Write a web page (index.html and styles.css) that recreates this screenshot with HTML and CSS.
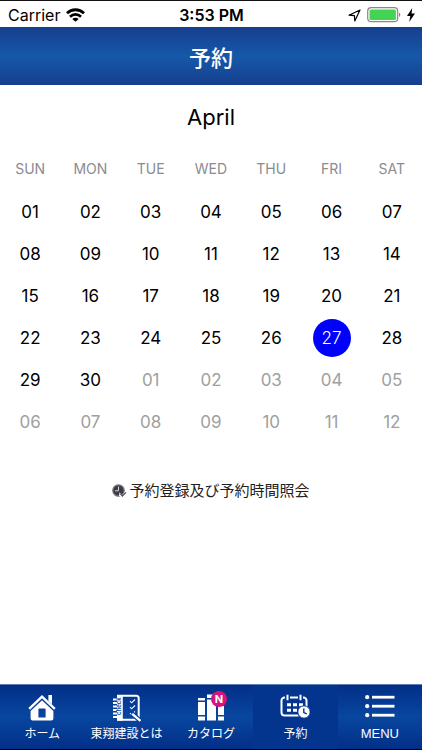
FILE: index.html
```html
<!DOCTYPE html>
<html lang="ja">
<head>
    <meta charset="UTF-8">
    <meta name="viewport" content="width=device-width, initial-scale=1.0">
    <title>予約</title>
    <link rel="stylesheet" href="styles.css">
</head>
<body>
    <!-- Status bar -->
    <div class="status-bar">
        <div class="status-left">
            <span>Carrier</span>
            <svg width="19" height="14" viewBox="0 0 19 14" fill="none" stroke="#000" stroke-width="2.8">
                <path d="M1 5.2C5.8.6 13.2.6 18 5.2"/>
                <path d="M4 8.7c3.2-3 7.8-3 11 0"/>
                <path d="M9.5 13.8L6.3 10.9c1.8-1.7 4.6-1.7 6.4 0z" fill="#000" stroke="none"/>
            </svg>
        </div>
        <div class="status-time">3:53 PM</div>
        <div class="status-right">
            <svg width="13" height="13" viewBox="0 0 13 13" fill="none" stroke="#000" stroke-width="1.2" stroke-linejoin="round">
                <path d="M12 1L1 6.2l5.4.5.4 5.3z"/>
            </svg>
            <svg width="34" height="16" viewBox="0 0 34 16">
                <rect x=".7" y=".7" width="30" height="14" rx="3.5" fill="#fff" stroke="#888" stroke-width="1.2"/>
                <rect x="2.5" y="2.5" width="26.4" height="10.4" rx="1.5" fill="#43d551"/>
                <path d="M32 5.5c1.8.8 1.8 3.6 0 4.4z" fill="#888"/>
            </svg>
            <svg width="8" height="14" viewBox="0 0 8 14"><path d="M5.2 0L0 8h3.3L2.2 14 8 5.6H4.6z"/></svg>
        </div>
    </div>

    <header class="header">
        <h1>予約</h1>
    </header>

    <main class="content">
        <!-- Calendar -->
        <table class="calendar">
            <caption>April</caption>
            <thead>
                <tr><th>SUN</th><th>MON</th><th>TUE</th><th>WED</th><th>THU</th><th>FRI</th><th>SAT</th></tr>
            </thead>
            <tbody id="days"></tbody>
        </table>

        <a href="#" class="reserve-link">
            <svg width="15" height="14" viewBox="0 0 15 14">
                <circle cx="6.5" cy="6.5" r="5.7" fill="#3c3c46" stroke="#777780" stroke-width="1.2"/>
                <path d="M6.5 2.5v4.3H3" fill="none" stroke="#d5d5dc" stroke-width="1"/>
                <path d="M7.5 8.3l2.6 3 4.2-4.6v5L11 14 7 12z" fill="#fff"/>
                <path d="M8.4 9.8l2 2.2L14 8.4" fill="none" stroke="#555560" stroke-width="1.3"/>
            </svg>
            <span>予約登録及び予約時間照会</span>
        </a>
    </main>

    <!-- Bottom navigation -->
    <nav class="tab-bar">
        <a href="#" class="tab">
            <svg class="tab-icon" width="30" height="28" viewBox="0 0 30 28">
                <path d="M2.2 14.8L15 2.6l12.8 12.2" fill="none" stroke="#fff" stroke-width="2.4"/>
                <path d="M21.4 1H25v9.3l-3.6-3.4z" fill="#fff"/>
                <path fill-rule="evenodd" d="M15 6.3l11.4 10.6v7.6a2 2 0 0 1-2 2H5.6a2 2 0 0 1-2-2v-7.6zM12.4 14.6a1 1 0 0 0-1 1v7.8h7.2v-7.8a1 1 0 0 0-1-1z" fill="#fff"/>
            </svg>
            <span>ホーム</span>
        </a>
        <a href="#" class="tab">
            <svg class="tab-icon" width="30" height="28" viewBox="0 0 30 28" fill="none" stroke="#fff">
                <path d="M6 1.8h18.5a2.2 2.2 0 0 1 2.2 2.2v19.5a2.2 2.2 0 0 1-2.2 2.2H6z" stroke-width="2"/>
                <path d="M5 1h5.8v25.6H5z" fill="#fff" stroke="none"/>
                <path d="M1 5.5h5M1 9h5M1 12.5h5M1 16h5M1 19.5h5M1 23h5" stroke-width="2"/>
                <text x="-21" y="9.4" transform="rotate(-90)" class="note-text">check</text>
                <path d="M18 7l1.6 1.8L23 5.5M18 13l1.6 1.8 3.4-3.3M18 19l1.6 1.8 3.4-3.3" stroke-width="1.1"/>
                <path d="M20 19.5l9 8" stroke="#073d98" stroke-width="4.6"/>
                <path d="M20.2 19.8l8.3 7" stroke-width="2.4"/>
            </svg>
            <span>東翔建設とは</span>
        </a>
        <a href="#" class="tab">
            <span class="icon-box">
                <svg class="tab-icon" width="30" height="28" viewBox="0 0 30 28" fill="#fff">
                    <path d="M2 4h7v2.5H2zM2 8h7v13H2zM2 22.5h7v4H2z"/>
                    <path d="M11 .5h9V4h-9zM11 5.5h9v21h-9z"/>
                    <path d="M22 12h6v9h-6zM22 22.5h6v4h-6z"/>
                </svg>
                <span class="badge">N</span>
            </span>
            <span>カタログ</span>
        </a>
        <a href="#" class="tab active">
            <svg class="tab-icon" width="30" height="28" viewBox="0 0 30 28" fill="none" stroke="#fff" stroke-width="2">
                <path d="M18.5 21.5h-14a3 3 0 0 1-3-3V6.5a3 3 0 0 1 3-3h19a3 3 0 0 1 3 3V13"/>
                <path d="M7.5 1v5.5M20.5 1v5.5" stroke="#03358f" stroke-width="5"/>
                <path d="M7.5 .8v5.4M20.5 .8v5.4"/>
                <path d="M7 10.8h4M13 10.8h4M19 10.8h4M7 16.3h4M13 16.3h4" stroke-width="3"/>
                <circle cx="24" cy="18" r="6.2" fill="#fff" stroke="#03358f" stroke-width="1"/>
                <path d="M23.8 14.4v4.2l3 1.3" stroke="#03358f" stroke-width="1.4"/>
            </svg>
            <span>予約</span>
        </a>
        <a href="#" class="tab">
            <svg class="tab-icon" width="30" height="28" viewBox="0 0 30 28" fill="#fff">
                <circle cx="2.2" cy="3.2" r="2.1"/><path d="M7 1.8h22.5v2.8H7z"/>
                <circle cx="2.2" cy="12.2" r="2.1"/><path d="M7 10.8h22.5v2.8H7z"/>
                <circle cx="2.2" cy="21.2" r="2.1"/><path d="M7 19.8h22.5v2.8H7z"/>
            </svg>
            <span class="tab-menu">MENU</span>
        </a>
    </nav>

    <script>
        // April starts on Sunday, the last cells belong to May
        const body = document.getElementById('days');
        const daysInMonth = 30;
        const selected = 27;

        for (let week = 0; week < 6; week++) {
            const row = body.insertRow();
            for (let d = 1; d <= 7; d++) {
                const n = week * 7 + d;
                const day = n > daysInMonth ? n - daysInMonth : n;
                const button = document.createElement('button');
                button.type = 'button';
                button.className = 'day';
                if (n > daysInMonth) button.classList.add('other-month');
                if (n === selected) button.classList.add('selected');
                button.textContent = String(day).padStart(2, '0');
                row.insertCell().appendChild(button);
            }
        }
    </script>
</body>
</html>
```
FILE: styles.css
```css
* {
    box-sizing: border-box;
}
body {
    margin: 0;
    min-height: 100vh;
    display: flex;
    flex-direction: column;
    background: #fff;
    color: #000;
    font-family: Inter, "Noto Sans CJK JP", sans-serif;
}

/* Status bar */
.status-bar {
    display: grid;
    grid-template-columns: 1fr auto 1fr;
    align-items: center;
    height: 27px;
    padding: 2px 7px 0 8px;
    border-top: 1px solid #111;
    font-size: 16px;
}
.status-left,
.status-right {
    display: flex;
    align-items: center;
    gap: 6px;
}
.status-right {
    justify-content: flex-end;
    gap: 6px;
}
.status-time {
    font-weight: 600;
}

/* Header */
.header {
    display: flex;
    align-items: center;
    justify-content: center;
    height: 58px;
    background: linear-gradient(#163f8f, #1658a9 50%, #163f8f);
    color: #fff;
}
.header h1 {
    margin: 0;
    font-size: 22px;
    font-weight: 500;
}

.content {
    flex: 1;
}

/* Calendar */
.calendar {
    width: 100%;
    table-layout: fixed;
    border-collapse: collapse;
}
.calendar caption {
    padding-top: 16px;
    font-size: 22px;
    line-height: 32px;
}
.calendar th {
    height: 58px;
    padding: 12px 0 0;
    color: #8b8b90;
    font-size: 14px;
    font-weight: 400;
}
.calendar td {
    height: 42px;
    padding: 0;
    text-align: center;
}
.day {
    width: 38px;
    height: 38px;
    padding: 0;
    border: 0;
    border-radius: 50%;
    background: none;
    color: #000;
    font-family: inherit;
    font-size: 17px;
    vertical-align: middle;
    cursor: pointer;
}
.day.other-month {
    color: #a0a0a0;
}
.day.selected {
    background: #00f;
    color: #fff;
    font-weight: 300;
}

/* Link below the calendar */
.reserve-link {
    display: flex;
    align-items: center;
    justify-content: center;
    gap: 2px;
    margin-top: 36px;
    color: #222;
    font-size: 15px;
    line-height: 24px;
    text-decoration: none;
}

/* Bottom navigation */
.tab-bar {
    display: grid;
    grid-template-columns: repeat(5, 1fr);
    height: 66px;
    border-top: 1px solid #5f7db5;
    border-bottom: 1px solid #000;
    background: linear-gradient(#022f87, #0846a0 50%, #022f87);
}
.tab {
    display: flex;
    flex-direction: column;
    align-items: center;
    padding-top: 9px;
    color: #fff;
    font-size: 12px;
    line-height: 24px;
    text-decoration: none;
    white-space: nowrap;
}
.tab.active {
    background: #03358f;
}
.tab-icon {
    display: block;
}
.tab-menu {
    font-family: "Liberation Sans", Arial, sans-serif;
    font-size: 13px;
}
.icon-box {
    position: relative;
}
.badge {
    position: absolute;
    top: -3px;
    right: -1px;
    width: 16px;
    height: 16px;
    border-radius: 50%;
    background: #d9127c;
    font-size: 11px;
    font-weight: 700;
    line-height: 16px;
    text-align: center;
}
.note-text {
    fill: #073d98;
    stroke: none;
    font-size: 6px;
    font-weight: 600;
}
```
